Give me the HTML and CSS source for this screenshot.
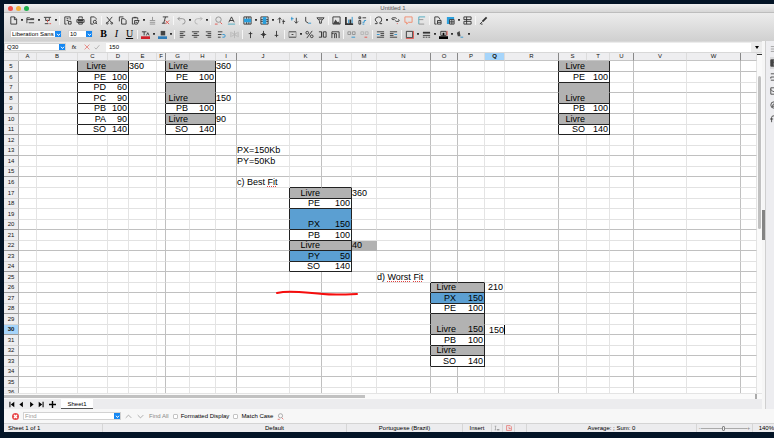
FILE: index.html
```html
<!DOCTYPE html>
<html lang="en">
<head>
<meta charset="utf-8">
<title>Untitled 1</title>
<link rel="stylesheet" href="styles.css">
</head>
<body>
<svg class="defs" aria-hidden="true">
  <symbol id="new" viewBox="0 0 10 10"><path d="M2 1h4l2.500 2.500V9H2zM6 1v3h2.500"/></symbol>
  <symbol id="open" viewBox="0 0 10 10"><path d="M1 8V2h3l1 1h4M1 4h8M3 7.500h6"/></symbol>
  <symbol id="save" viewBox="0 0 10 10"><path d="M1 1.500h8M3 2v3h4V2M2 8.500h4"/><path class="red" d="M7 8.500h2M5 4v3"/></symbol>
  <symbol id="export" viewBox="0 0 10 10"><path d="M8 4V1H2v8h2M4 3h2M4 5h2M6 6h3v3H6z"/></symbol>
  <symbol id="print" viewBox="0 0 10 10"><path d="M3 3V1h4v2M1 4h8v3H1zM3 7h4v2H3z"/><path d="M2 5h6" stroke-width="2"/></symbol>
  <symbol id="preview" viewBox="0 0 10 10"><path d="M8 4V3L6 1H2v8h3M9 9L7.500 7.500"/><circle cx="6.500" cy="6.500" r="1.700"/></symbol>
  <symbol id="cut" viewBox="0 0 10 10"><path d="M2 1l5 6M8 1L3 7"/><circle cx="2.500" cy="8" r="1"/><circle cx="7.500" cy="8" r="1"/></symbol>
  <symbol id="copy" viewBox="0 0 10 10"><path d="M1.500 6V1H6M4 3h3l2 2v4H4z"/></symbol>
  <symbol id="paste" viewBox="0 0 10 10"><path d="M3 9H1.500V2h6v2M3 1.500h3M4 5h5L7 9H4zM5 7h2"/></symbol>
  <symbol id="brush" viewBox="0 0 10 10"><path class="gray" d="M5 1v4M2 5h6M2 7h6M2 9h6"/></symbol>
  <symbol id="clear" viewBox="0 0 10 10"><path d="M2 1h6M5 1L3 8M1 8h4"/><path class="red" d="M5 5l4 4M9 5L5 9"/></symbol>
  <symbol id="undo" viewBox="0 0 10 10"><path class="gray" d="M3 1L1 3l2 2M1 3h5q3 0 3 3t-3 3"/></symbol>
  <symbol id="redo" viewBox="0 0 10 10"><path class="pale" d="M7 1l2 2-2 2M9 3H4Q1 3 1 6t3 3"/></symbol>
  <symbol id="find" viewBox="0 0 10 10"><circle class="gray" cx="5" cy="4" r="3"/><path class="red" d="M7 7l2 2M1 9h3"/></symbol>
  <symbol id="spell" viewBox="0 0 10 10"><path d="M2 7l3-6 3 6M3 5h4"/><path class="teal" d="M1 9h8"/></symbol>
  <symbol id="rows" viewBox="0 0 10 10"><path d="M1 1h8v8H1zM4 1v8M6.500 1v8"/><path class="bluefill" d="M1 3h8v4H1z"/></symbol>
  <symbol id="cols" viewBox="0 0 10 10"><path d="M1 1h8v8H1zM1 4h8M1 6h8"/><path class="bluefill" d="M3 1h4v8H3z"/></symbol>
  <symbol id="sort" viewBox="0 0 10 10"><path d="M3 8V2M1 4l2-2 2 2M7 4v5M6 6h3"/></symbol>
  <symbol id="asc" viewBox="0 0 10 10"><path class="blue" d="M2 1v4M1 3h3"/><path d="M7 2v6M5 6l2 2 2-2"/></symbol>
  <symbol id="desc" viewBox="0 0 10 10"><path d="M3 1v5l3 2"/><path class="blue" d="M6 8h3"/></symbol>
  <symbol id="filter" viewBox="0 0 10 10"><path d="M1 2h8L6 5.500V8H4V5.500zM3 3.500h4"/></symbol>
  <symbol id="image" viewBox="0 0 10 10"><path d="M1 1h8v8H1z"/><path class="darkfill" d="M1 9l3-5 2 3 1-1 2 3z"/></symbol>
  <symbol id="chart" viewBox="0 0 10 10"><path d="M1 1v8h8M6 9V4" stroke-width="2"/><path class="blue" d="M4 8V4M8 8V1"/></symbol>
  <symbol id="pivot" viewBox="0 0 10 10"><path d="M1 1h2v2H1zM5 2h4M1 5h2v4H1z"/><path class="blue" d="M5 7h2V5h2M5 9h2"/></symbol>
  <symbol id="omega" viewBox="0 0 10 10"><path d="M1 8.500h2.500V7Q1 5.500 1.500 3.500T5 1t3.500 2.500T6.500 7v1.500H9"/></symbol>
  <symbol id="link" viewBox="0 0 10 10"><path d="M4 4H2Q1 4 1 3t1-1h3q1 0 1 1M5 5q0 1 1 1h2q1 0 1-1T8 4"/><path class="red" d="M7 8v1"/></symbol>
  <symbol id="comment" viewBox="0 0 10 10"><path class="orange" d="M1 1h8v6H5L3 9V7H1z"/></symbol>
  <symbol id="header" viewBox="0 0 10 10"><path class="teal" d="M2 9V1h7"/><path class="gray" d="M2 4h5M2 9h6"/></symbol>
  <symbol id="area" viewBox="0 0 10 10"><path d="M8 4L6 1H2v8h2M5 5h4v4H5zM5 7h4"/></symbol>
  <symbol id="freeze" viewBox="0 0 10 10"><path class="bluefill" d="M1 1h8v3H4v5H1z"/><path d="M4 4h5v5H4zM4 6.500h5M6.500 4v5"/></symbol>
  <symbol id="split" viewBox="0 0 10 10"><path d="M1 1h8v3H1zM1 6h8v3H1zM4 1v8"/></symbol>
  <symbol id="draw" viewBox="0 0 10 10"><path d="M8.500 1.500L4 6" stroke-width="2"/><path d="M1 9l3-3M2 9h2"/></symbol>
  <symbol id="fontcolor" viewBox="0 0 10 10"><path d="M1 2h5M3.500 2v4M6 6l1.500-3L9 6"/><path class="redfill" d="M0 7h10v3H0z"/></symbol>
  <symbol id="highlight" viewBox="0 0 10 10"><path class="darkfill" d="M3 1h5v5H3z"/><path class="steelfill" d="M0 7h10v3H0z"/></symbol>
  <symbol id="left" viewBox="0 0 10 10"><path d="M2 2h6M2 4h4M2 6h6M2 8h4"/></symbol>
  <symbol id="center" viewBox="0 0 10 10"><path d="M1 2h8M3 4h4M1 6h8M3 8h4"/></symbol>
  <symbol id="right" viewBox="0 0 10 10"><path d="M2 2h6M4 4h4M2 6h6M4 8h4"/></symbol>
  <symbol id="wrap" viewBox="0 0 10 10"><path d="M1 2h5M1 5h4M1 8h3"/><path class="blue" d="M6 5h2q1 0 1 1.500T8 8H6"/></symbol>
  <symbol id="merge" viewBox="0 0 10 10"><path class="pale" d="M1 2v6M9 2v6M2 3l6 4M8 3L2 7M5 1v8"/></symbol>
  <symbol id="top" viewBox="0 0 10 10"><path d="M5 2v7M3 4h4"/></symbol>
  <symbol id="middle" viewBox="0 0 10 10"><path d="M5 1v8M2 5h6M3.500 4h3M3.500 6h3"/></symbol>
  <symbol id="bottom" viewBox="0 0 10 10"><path d="M5 1v7M3 6h4"/></symbol>
  <symbol id="currency" viewBox="0 0 10 10"><path d="M1 2h8M1 8h8M4 5h2"/><path class="gray" d="M1 2v6M9 2v6"/></symbol>
  <symbol id="percent" viewBox="0 0 10 10"><circle cx="2.500" cy="3" r="1.500"/><circle cx="7.500" cy="7" r="1.500"/><path d="M8 1L2 9"/></symbol>
  <symbol id="number" viewBox="0 0 10 10"><path d="M1 2h3v6H1M6 2h3v6H6zM4 2v6"/></symbol>
  <symbol id="date" viewBox="0 0 10 10"><path d="M1 9V2h8v7M4 9V4h2v5M1 4h2"/></symbol>
  <symbol id="adddec" viewBox="0 0 10 10"><path class="gray" d="M1 2h3v3H1zM6 2h3v3H6z"/><path class="blue" d="M5 8h4"/></symbol>
  <symbol id="deldec" viewBox="0 0 10 10"><path class="pale" d="M1 2h3v3H1zM6 2h3v3H6z"/><path class="red" d="M5 8h3"/></symbol>
  <symbol id="indent" viewBox="0 0 10 10"><path d="M1 2h8M5 4h4M5 6h4M1 8h8"/><path class="blue" d="M1 5h3"/></symbol>
  <symbol id="outdent" viewBox="0 0 10 10"><path d="M1 2h8M1 4h4M1 6h4M1 8h8"/><path class="blue" d="M6 5h3"/></symbol>
  <symbol id="border" viewBox="0 0 10 10"><path d="M1.500 1.500h7v7h-7z"/><path class="red" d="M9.500 1v8.500H1"/></symbol>
  <symbol id="linestyle" viewBox="0 0 10 10"><path d="M1 3h8" stroke-width="2"/><path d="M1 6h8M1 8h2M4 8h2M7 8h2"/></symbol>
  <symbol id="linecolor" viewBox="0 0 10 10"><path d="M2 1.500h6V6H2z"/><path class="red" d="M9 1v5"/><path class="blackfill" d="M0 7h10v3H0zM4 3h2v3H4z"/></symbol>
  <symbol id="cond" viewBox="0 0 10 10"><path class="darkfill" d="M1 3l3-2 1 6H2z"/><path class="blue" d="M5 8h3"/></symbol>
  <symbol id="down" viewBox="0 0 10 10"><path class="white" d="M2 3.500L5 7l3-3.500"/></symbol>
  <symbol id="first" viewBox="0 0 10 10"><path class="blackfill" d="M2 1h1.500v8H2zM9 1v8L4 5z"/></symbol>
  <symbol id="prev" viewBox="0 0 10 10"><path class="blackfill" d="M7 1v8L2 5z"/></symbol>
  <symbol id="next" viewBox="0 0 10 10"><path class="blackfill" d="M3 1v8l5-4z"/></symbol>
  <symbol id="last" viewBox="0 0 10 10"><path class="blackfill" d="M8 1H6.500v8H8zM1 1v8l5-4z"/></symbol>
  <symbol id="plus" viewBox="0 0 10 10"><path class="blackfill" d="M4 0h2v4h4v2H6v4H4V6H0V4h4z"/></symbol>
  <symbol id="close" viewBox="0 0 10 10"><circle class="closefill" cx="5" cy="5" r="5"/><path class="white" d="M3 3l4 4M7 3L3 7" stroke-width="1"/></symbol>
  <symbol id="up" viewBox="0 0 10 10"><path class="gray" d="M1 7l4-4 4 4"/></symbol>
  <symbol id="dn" viewBox="0 0 10 10"><path class="gray" d="M1 3l4 4 4-4"/></symbol>
  <symbol id="cancel" viewBox="0 0 10 10"><path class="red" d="M1 1l8 8M9 1L1 9"/></symbol>
  <symbol id="accept" viewBox="0 0 10 10"><path class="gray" d="M1 6l2.500 2.500L9 2"/></symbol>
  <symbol id="menu" viewBox="0 0 10 10"><path class="gray" d="M1 2h8M1 5h8M1 8h8"/></symbol>
  <symbol id="props" viewBox="0 0 10 10"><path d="M1 1h8v8H1zM1 4h8M4 1v8"/><path class="darkfill" d="M1 1h3v8H1z"/></symbol>
  <symbol id="styles" viewBox="0 0 10 10"><path d="M1 1h5v4M1 9h8M1 7V5h4"/></symbol>
  <symbol id="gallery" viewBox="0 0 10 10"><path d="M1 1h8v8H1zM1 3l3 3 5-5"/></symbol>
  <symbol id="navigator" viewBox="0 0 10 10"><circle cx="5" cy="5" r="4"/><path d="M3 7l1-3 3-1-1 3z"/></symbol>
  <symbol id="func" viewBox="0 0 10 10"><path d="M2 9V3q0-2 3-2M0 5h4"/></symbol>
  <symbol id="moddoc" viewBox="0 0 10 10"><path class="red" d="M1 1h6l2 2v6H1zM5 3v3h3"/></symbol>
  <symbol id="sel" viewBox="0 0 10 10"><path class="gray" d="M1 2h3M2.500 2v6M1 8h3"/><path d="M5 8h4"/></symbol>
</svg>

<div class="window">
  <header class="titlebar">
    <span class="light light-close"></span><span class="light light-min"></span><span class="light light-max"></span>
    <h1>Untitled 1</h1>
  </header>

  <div class="toolbars">
    <div class="toolbar" id="standard"></div>
    <div class="toolbar">
      <div class="combo combo-font"><select aria-label="Font name"><option>Liberation Sans</option></select><span class="arrow"><svg><use href="#down"/></svg></span></div>
      <div class="combo combo-size"><select aria-label="Font size"><option>10</option></select><span class="arrow"><svg><use href="#down"/></svg></span></div>
      <button class="tool glyph"><b>B</b></button><button class="tool glyph"><i>I</i></button><button class="tool glyph"><u>U</u></button>
      <div class="toolgroup" id="formatting"></div>
    </div>
  </div>

  <div class="workspace">
    <main class="document">
      <div class="formula">
        <div class="combo combo-name"><input aria-label="Name box" value="Q30"><button class="arrow" aria-label="Names"><svg><use href="#down"/></svg></button></div>
        <button class="fx"><i>f</i>x</button>
        <button class="mini" aria-label="Cancel"><svg><use href="#cancel"/></svg></button>
        <button class="mini" aria-label="Accept"><svg><use href="#accept"/></svg></button>
        <input class="formula-input" aria-label="Formula" value="150">
        <button class="expand" aria-label="Expand formula bar"><span class="caret"></span></button>
      </div>
      <div class="sheet-row">
        <div class="sheet">
          <table><colgroup id="columns"></colgroup><thead id="head"></thead><tbody id="body"></tbody></table>
          <svg class="stroke" viewBox="0 0 84 6"><path d="M2 3Q10 1 24 2T48 4T82 4"/></svg>
        </div>
        <div class="vscroll"><span class="vsplit"></span><span class="vthumb"></span></div>
      </div>
      <div class="hscroll"><span class="hthumb"></span><span class="hsplit"></span></div>
      <nav class="tabs">
        <button aria-label="First sheet"><svg><use href="#first"/></svg></button>
        <button aria-label="Previous sheet"><svg><use href="#prev"/></svg></button>
        <button aria-label="Next sheet"><svg><use href="#next"/></svg></button>
        <button aria-label="Last sheet"><svg><use href="#last"/></svg></button>
        <button class="add" aria-label="Add sheet"><svg><use href="#plus"/></svg></button>
        <button class="tab">Sheet1</button>
      </nav>
    </main>
    <div class="divider"><span class="handle"></span></div>
    <aside class="sidebar">
      <button aria-label="Sidebar settings"><svg><use href="#menu"/></svg></button>
      <button class="active" aria-label="Properties"><svg><use href="#props"/></svg></button>
      <button aria-label="Styles"><svg><use href="#styles"/></svg></button>
      <button aria-label="Gallery"><svg><use href="#gallery"/></svg></button>
      <button aria-label="Navigator"><svg><use href="#navigator"/></svg></button>
      <button aria-label="Functions"><svg><use href="#func"/></svg></button>
    </aside>
  </div>

  <form class="findbar">
    <button type="button" class="mini" aria-label="Close find bar"><svg><use href="#close"/></svg></button>
    <div class="combo combo-find"><input aria-label="Find" placeholder="Find"><button type="button" class="arrow" aria-label="History"><svg><use href="#down"/></svg></button></div>
    <button type="button" class="step" aria-label="Find previous"><svg><use href="#up"/></svg></button>
    <button type="button" class="step" aria-label="Find next"><svg><use href="#dn"/></svg></button>
    <button type="button" class="findall">Find All</button>
    <label><input type="checkbox">Formatted Display</label>
    <label><input type="checkbox">Match Case</label>
    <button type="button" class="mini" aria-label="Find and replace"><svg><use href="#find"/></svg></button>
  </form>

  <footer class="status">
    <span class="first">Sheet 1 of 1</span><span class="style">Default</span><span>Portuguese (Brazil)</span><span>Insert</span>
    <span><svg><use href="#sel"/></svg></span><span><svg><use href="#moddoc"/></svg></span><span></span>
    <span>Average: ; Sum: 0</span>
    <span class="zoom">-<input type="range" aria-label="Zoom" min="0" max="100" value="50">+</span>
    <span class="percent">140%</span>
  </footer>
</div>
<script src="script.js"></script>
</body>
</html>
```

FILE: styles.css
```css
* { box-sizing: border-box; }

body {
  margin: 0;
  height: 100vh;
  padding: 4px 0 6px 4px;
  background: #031426;
  font-family: "Liberation Sans", Arial, sans-serif;
  font-size: 6px;
  line-height: 8px;
  color: #000;
  overflow: hidden;
}

.defs { display: none; }

svg {
  display: block;
  width: 8px;
  height: 8px;
  fill: none;
  stroke: #333;
  stroke-width: 1;
  flex: none;
}

.red { stroke: #e4504a; }
.orange { stroke: #f08a6c; }
.blue { stroke: #2a93d0; }
.teal { stroke: #4aa8c0; }
.gray { stroke: #909090; }
.pale { stroke: #b4b4b4; }
.white { stroke: #fff; stroke-width: 2; }
.bluefill { fill: #2a9fdc; stroke: none; }
.darkfill { fill: #444; stroke: none; }
.blackfill { fill: #000; stroke: none; }
.redfill { fill: #d0202a; stroke: none; }
.steelfill { fill: #2f7cb8; stroke: none; }
.closefill { fill: #e8484a; stroke: none; }

button {
  display: flex;
  align-items: center;
  justify-content: center;
  padding: 0;
  border: 0;
  background: none;
  font: inherit;
  color: inherit;
}

input, select { font: inherit; color: inherit; }

.window { height: 100%; display: flex; flex-direction: column; background: #ececec; }

.titlebar {
  display: flex;
  align-items: center;
  gap: 3px;
  height: 9px;
  padding-left: 4px;
  background: linear-gradient(#f0f0f0, #d6d6d6);
  border-bottom: 1px solid #bdbdbd;
}
.titlebar h1 { flex: 1; margin: 0 20px 0 0; text-align: center; font-size: 6px; font-weight: normal; color: #555; }
.light { width: 5px; height: 5px; border-radius: 50%; }
.light-close { background: #f2504a; }
.light-min { background: #f4b03a; }
.light-max { background: #1fb14c; }

.toolbars { height: 28px; background: linear-gradient(#ececec, #d0d0d0); }
.toolbar { display: flex; align-items: center; height: 14px; padding-left: 3px; }
.toolbar + .toolbar { padding-left: 6px; }
.toolgroup { display: flex; align-items: center; }
.tool { width: 13px; height: 12px; flex: none; }
.tool svg { width: 9px; height: 9px; }
.drop { width: 4px; height: 12px; flex: none; }
.drop::before { content: ""; width: 2px; height: 2px; background: #333; border-radius: 0 0 1px 1px; }
.sep { width: 1px; height: 9px; margin: 0 1px; background: #f6f6f6; flex: none; }
.glyph { font-family: "Liberation Serif", serif; font-size: 10px; }

.combo { display: flex; height: 8px; background: #fff; outline: 1px solid #d2d2d2; outline-offset: -1px; flex: none; }
.combo select, .combo input {
  flex: 1;
  min-width: 0;
  height: 8px;
  padding: 0 0 0 2px;
  border: 0;
  background: transparent;
  appearance: none;
  outline: 0;
}
.arrow { display: flex; align-items: center; justify-content: center; width: 7px; height: 8px; background: #1587f2; border-radius: 1px; flex: none; }
.arrow svg { width: 5px; height: 5px; }
.combo-font { width: 52px; margin-right: 6px; }
.combo-size { width: 25px; margin-right: 4px; }
.combo-name { width: 62px; }
.combo-name input { padding-left: 3px; }
.combo-find { width: 98px; }
.combo input::placeholder { color: #999; opacity: 1; }

.workspace { flex: 1; display: flex; min-height: 0; }
.document { flex: 1; display: flex; flex-direction: column; min-width: 0; }

.formula { display: flex; align-items: center; height: 12px; border-top: 1px solid #d8d8d8; border-bottom: 1px solid #d8d8d8; }
.fx { width: 16px; }
.mini svg { width: 6px; height: 6px; }
.formula .mini { width: 10px; }
.formula-input { flex: 1; min-width: 0; height: 9px; margin-left: 4px; padding: 0 0 0 3px; border: 0; background: #fff; outline: 0; }
.expand { width: 11px; }
.caret { border: 2px solid transparent; border-top: 3px solid #000; border-bottom: 0; }

.sheet-row { flex: 1; display: flex; min-height: 0; }
.sheet { flex: 1; position: relative; overflow: hidden; background: #fff; }

table { width: 100%; table-layout: fixed; border-collapse: separate; border-spacing: 0; }
th { padding: 0; height: 8px; background: #eeeef0; font-weight: normal; line-height: 7px; border-right: 1px solid #dcdcdc; border-bottom: 1px solid #c4c4c4; color: #111; }
tbody th { height: auto; line-height: 9px; border-right-color: #aaa; border-bottom-color: #d4d4d4; }
thead th.strong { border-right-color: #888; }
tr.strong th { border-bottom-color: #999; }
th.current { background: #a6d5fb; font-weight: bold; }

tbody tr { height: 10px; }
tbody tr.tall { height: 11px; }
td { padding: 0 1px 0 0; font-size: 9px; line-height: 9px; white-space: nowrap; border-right: 1px solid #e4e4e4; border-bottom: 1px solid #e2e2e2; }
td.strong { border-right-color: #c0c0c0; }
tr.strong td { border-bottom-color: #c0c0c0; }
tr td.num { text-align: right; }
tr td.free { background: #b2b2b2; border-color: #b2b2b2; }
tr td.used { background: #5b9fd2; border-color: #5b9fd2; }
tr td.inner { border-right-width: 0; padding-right: 2px; }
tr td.edge-right { border-right-color: #222; }
tr td.edge-bottom { border-bottom-color: #222; }
tr td.editing { padding: 0; border-right-color: #000; }
td input { display: block; width: 100%; height: 9px; padding: 0; border: 0; background: #fff; text-align: right; outline: 0; }
.typo { text-decoration: underline dotted #e04040 1px; text-underline-offset: 1px; }

.stroke { position: absolute; left: 271px; top: 237px; width: 84px; height: 6px; }
.stroke path { stroke: #f60d0d; stroke-width: 2; stroke-linecap: round; }

.vscroll { width: 5px; display: flex; flex-direction: column; align-items: center; background: #fafafa; }
.vsplit { width: 5px; height: 2px; margin-bottom: 21px; background: #333; border-top: 1px solid #eee; }
.vthumb { width: 3px; height: 45%; background: #c1c1c1; border-radius: 2px; }
.hscroll { display: flex; align-items: center; height: 6px; padding-right: 5px; background: #fafafa; border-top: 1px solid #e4e4e4; }
.hthumb { width: 48%; height: 3px; background: #c1c1c1; }
.hsplit { width: 2px; height: 5px; margin-left: auto; background: #aaa; }

.tabs { display: flex; align-items: center; height: 10px; padding-left: 2px; background: #ececee; }
.tabs button { width: 10px; }
.tabs svg { width: 7px; height: 7px; }
.tabs .add { width: 13px; }
.tabs .tab { width: 32px; height: 10px; margin-left: 2px; background: #fff; border-bottom: 1px solid #555; }

.divider { display: flex; align-items: center; width: 4px; background: #f6f6f6; border-right: 1px solid #cfcfcf; }
.handle { width: 3px; height: 30px; background: #848484; }
.sidebar { display: flex; flex-direction: column; gap: 2px; width: 8px; padding: 2px 0 0 4px; background: #ededf0; overflow: hidden; }
.sidebar button { width: 12px; height: 12px; justify-content: flex-start; flex: none; }
.sidebar .active { background: #d8d8da; }

.findbar { display: flex; align-items: center; height: 14px; padding-left: 8px; background: #f7f7f7; }
.findbar .combo { margin: 0 1px 0 4px; }
.findbar > .mini svg { width: 7px; height: 7px; }
.step { width: 12px; }
.step svg { width: 7px; height: 7px; }
.findall { margin: 0 4px 0 3px; color: #888; }
.findbar label { display: flex; align-items: center; margin-right: 4px; }
.findbar label input { appearance: none; width: 5px; height: 5px; margin: 0 3px 0 0; background: #fff; border: 1px solid #c4c4c4; border-radius: 1px; }

.status {
  display: grid;
  grid-template-columns: 99fr 244fr 116fr 29fr 11fr 12fr 12fr 170fr 56fr 21fr;
  height: 9px;
  background: #ececee;
  border-top: 1px solid #d4d4d4;
}
.status > span { display: flex; align-items: center; justify-content: center; min-width: 0; border-right: 1px solid #d6d6d6; white-space: nowrap; }
.status .first { justify-content: flex-start; padding-left: 4px; }
.status .style { padding-left: 41%; }
.status svg { width: 6px; height: 6px; }
.status .zoom { color: #888; }
.zoom input { appearance: none; width: 46px; height: 5px; margin: 0; background: linear-gradient(#aaa, #aaa) center / 100% 1px no-repeat; }
.zoom input::-webkit-slider-thumb { appearance: none; width: 3px; height: 5px; background: #eee; border: 1px solid #888; border-radius: 1px; }
.status .percent { border: 0; justify-content: flex-end; }
```

FILE: script.js
```js
// Toolbars: "name" is a button, "name+" also has a drop-down, "|" is a separator.
const toolbars = {
  standard: 'new+ open+ save+ | export print preview | cut copy paste+ brush clear | undo+ redo+ | find spell | rows+ cols+ sort asc desc filter | image chart pivot | omega+ link comment header | area freeze+ split | draw',
  formatting: '| fontcolor+ highlight+ | left center right wrap merge | top middle bottom | currency+ percent number date | adddec deldec | indent outdent | border+ linestyle+ linecolor+ cond+'
};
for (const [id, items] of Object.entries(toolbars)) {
  document.getElementById(id).innerHTML = items.split(' ').map(item => {
    if (item === '|') return '<span class="sep"></span>';
    const name = item.replace('+', '');
    const drop = item.endsWith('+') ? `<button class="drop" aria-label="${name} options"></button>` : '';
    return `<button class="tool" aria-label="${name}"><svg><use href="#${name}"/></svg></button>${drop}`;
  }).join('');
}

const letters = 'ABCDEFGHIJKLMNOPQRSTUVWX'.split('');
const widths = [18, 41, 30, 21, 28, 9, 24, 26, 21, 53, 32, 30, 25, 54, 27, 27, 20, 54, 28, 23, 24, 53, 54];
const strongColumns = 'FIKNORUW';
const strongRows = [5, 7, 9, 11, 13, 15, 20, 22, 24, 26, 28, 30, 32, 34];
const FIRST = 5, LAST = 36;
const cells = {};
const cell = ref => (cells[ref] ??= { text: '', classes: [] });

// A memory map: [label, size, kind, rows] from the top down, two columns wide.
function memory(left, right, row, blocks) {
  const before = letters[letters.indexOf(left) - 1];
  if (row > FIRST) [left, right].forEach(c => cell(c + (row - 1)).classes.push('edge-bottom'));
  for (const [label, size, kind, rows = 1] of blocks) {
    for (let i = 1; i <= rows; i++, row++) {
      cell(before + row).classes.push('edge-right');
      cell(left + row).classes.push('num', kind, 'inner');
      cell(right + row).classes.push('num', kind, 'edge-right');
      if (i === rows) {
        cell(left + row).text = label;
        cell(right + row).text = size;
        [left, right].forEach(c => cell(c + row).classes.push('edge-bottom'));
      }
    }
  }
}
const free = (size = '', rows = 1) => ['Livre', size, 'free', rows];
const proc = (name, size) => [name, size, 'plain'];
const shared = [free(), proc('PE', 100), free('', 2), proc('PB', 100), free(), proc('SO', 140)];

memory('C', 'D', 5, [free(), proc('PE', 100), proc('PD', 60), proc('PC', 90), proc('PB', 100), proc('PA', 90), proc('SO', 140)]);
memory('G', 'H', 5, shared);
memory('S', 'T', 5, shared);
memory('K', 'L', 17, [free(), proc('PE', 100), ['PX', 150, 'used', 2], proc('PB', 100), free(), ['PY', 50, 'used'], proc('SO', 140)]);
memory('O', 'P', 26, [free(), ['PX', 150, 'used'], proc('PE', 100), free(150, 2), proc('PB', 100), free(), proc('SO', 140)]);

const notes = {
  E5: '360', I5: '360', I8: '150', I10: '90', M17: '360', M22: '40', Q26: '210',
  J13: 'PX=150Kb', J14: 'PY=50Kb', J16: 'c) Best <span class="typo">Fit</span>',
  N25: 'd) <span class="typo">Worst</span> <span class="typo">Fit</span>',
  Q30: '<input aria-label="Q30" value="150">'
};
for (const [ref, text] of Object.entries(notes)) cell(ref).text = text;
cell('M22').classes.push('free');
cell('Q26').classes.push('num');
cell('Q30').classes.push('editing');

document.getElementById('columns').innerHTML =
  '<col style="width:15px">' + widths.map(w => `<col style="width:${w}px">`).join('') + '<col>';
document.getElementById('head').innerHTML = '<tr><th></th>' + letters.map(c =>
  `<th class="${strongColumns.includes(c) ? 'strong' : ''} ${c === 'Q' ? 'current' : ''}">${c === 'X' ? '' : c}</th>`).join('') + '</tr>';

let html = '';
for (let r = FIRST; r <= LAST; r++) {
  const tall = r === 5 || (r <= 16 ? r % 2 === 0 : r % 2 === 1);
  html += `<tr class="${tall ? 'tall' : ''} ${strongRows.includes(r) ? 'strong' : ''}"><th class="${r === 30 ? 'current' : ''}">${r}</th>`;
  for (const c of letters) {
    const data = cells[c + r] || { text: '', classes: [] };
    html += `<td class="${strongColumns.includes(c) ? 'strong ' : ''}${data.classes.join(' ')}">${data.text}</td>`;
  }
  html += '</tr>';
}
document.getElementById('body').innerHTML = html;
```
